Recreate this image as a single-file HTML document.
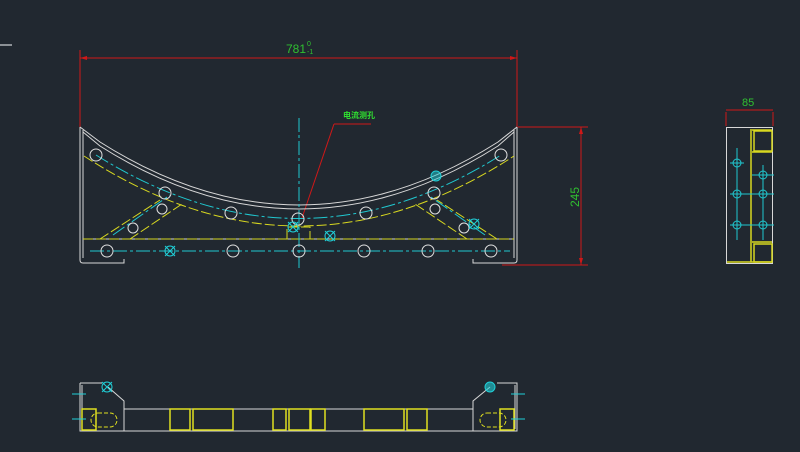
<!DOCTYPE html>
<html><head><meta charset="utf-8"><style>
html,body{margin:0;padding:0;background:#212830;width:800px;height:452px;overflow:hidden}
svg{display:block}
text{font-family:"Liberation Sans","Noto Sans CJK SC",sans-serif}
</style></head><body>
<svg width="800" height="452" viewBox="0 0 800 452" fill="none">
<rect width="800" height="452" fill="#212830"/>
<line x1="0" y1="45" x2="12" y2="45" stroke="#b0b4b8" stroke-width="1.5"/>

<!-- top dimension -->
<g stroke="#d01818" stroke-width="1">
<line x1="80" y1="50" x2="80" y2="127"/>
<line x1="517" y1="50" x2="517" y2="127"/>
<line x1="80" y1="58" x2="517" y2="58"/>
<line x1="518" y1="127" x2="588" y2="127"/>
<line x1="502" y1="265" x2="588" y2="265"/>
<line x1="581" y1="127" x2="581" y2="265"/>
<line x1="302" y1="218" x2="334" y2="124"/>
<line x1="334" y1="124" x2="371" y2="124"/>
</g>
<path d="M80 58 l7 -2 v4z M517 58 l-7 -2 v4z M581 127 l-2 7 h4z M581 265 l-2 -7 h4z" fill="#d01818"/>
<text x="286" y="53" fill="#30c030" font-size="12">781</text>
<text x="307" y="46" fill="#30c030" font-size="7">0</text>
<text x="307" y="54" fill="#30c030" font-size="7">-1</text>
<text x="343" y="118" fill="#30e030" font-size="8" font-weight="bold">电流测孔</text>
<text x="0" y="0" fill="#30c030" font-size="12" transform="translate(579,207) rotate(-90)">245</text>

<!-- main frame -->
<g stroke="#d8d8d8" stroke-width="1">
<path d="M80 127 V260 Q80 263 83 263 H124 V259"/>
<path d="M83 130 V258"/>
<path d="M517 127 V260 Q517 263 514 263 H473 V259"/>
<path d="M514 130 V258"/>
<path d="M80 127 L100 142 Q299 268 498 142 L517 127"/>
<path d="M83 132 L100 146 Q299 272 498 146 L514 132"/>
<line x1="83" y1="239" x2="514" y2="239"/>
</g>
<!-- yellow dashed -->
<g stroke="#d8d820" stroke-width="1" stroke-dasharray="10 3">
<line x1="83" y1="239" x2="514" y2="239"/>
<path d="M84 156 Q299 296 514 156"/>
<path d="M100 239 L160 200 M130 239 L182 204 M497 239 L437 200 M467 239 L415 204"/>
<path d="M287 239 V227 H310 V239"/>
</g>
<!-- cyan center lines -->
<g stroke="#20c8d0" stroke-width="1" stroke-dasharray="14 3 3 3">
<line x1="299" y1="118" x2="299" y2="268"/>
<line x1="90" y1="251" x2="510" y2="251"/>
<path d="M96 155 Q299 282 501 155"/>
<path d="M113 235 L170 195 M485 235 L428 195"/>
</g>
<!-- holes -->
<g stroke="#e0e0e0" stroke-width="1">
<circle cx="107" cy="251" r="6"/><circle cx="233" cy="251" r="6"/><circle cx="299" cy="251" r="6"/>
<circle cx="364" cy="251" r="6"/><circle cx="428" cy="251" r="6"/><circle cx="491" cy="251" r="6"/>
<circle cx="96" cy="155" r="6"/><circle cx="501" cy="155" r="6"/>
<circle cx="165" cy="193" r="6"/><circle cx="434" cy="193" r="6"/>
<circle cx="231" cy="213" r="6"/><circle cx="366" cy="213" r="6"/>
<circle cx="298" cy="219" r="6"/>
<circle cx="162" cy="209" r="5"/><circle cx="435" cy="209" r="5"/>
<circle cx="133" cy="228" r="5"/><circle cx="464" cy="228" r="5"/>
</g>
<g stroke="#20d0d8" stroke-width="1">
<circle cx="170" cy="251" r="5"/><path d="M165 246l10 10M175 246l-10 10"/>
<circle cx="330" cy="236" r="5"/><path d="M325 231l10 10M335 231l-10 10"/>
<circle cx="293" cy="227" r="5"/><path d="M288 222l10 10M298 222l-10 10"/>
<circle cx="436" cy="176" r="5" fill="#20d0d8" fill-opacity=".5"/>
<circle cx="474" cy="224" r="5"/><path d="M469 219l10 10M479 219l-10 10"/>
</g>

<!-- side view -->
<g stroke="#d01818" stroke-width="1">
<line x1="726" y1="112" x2="726" y2="126"/><line x1="773" y1="112" x2="773" y2="126"/>
<line x1="726" y1="110" x2="773" y2="110"/>
</g>
<text x="742" y="106" fill="#30c030" font-size="11">85</text>
<g stroke="#d8d8d8"><rect x="726.5" y="127.5" width="46" height="136"/></g>
<g stroke="#d8d820" stroke-width="1.5">
<path d="M751 129 V262 M752 130 H772 M752 152 H772 M752 242 H772 M727 262 H772"/>
<rect x="754" y="131" width="18" height="20"/><rect x="754" y="244" width="18" height="18"/>
</g>
<g stroke="#20c8d0" stroke-width="1">
<line x1="737" y1="148" x2="737" y2="240"/><line x1="763" y1="165" x2="763" y2="240"/>
<circle cx="737" cy="163" r="4"/><circle cx="737" cy="194" r="4"/><circle cx="737" cy="225" r="4"/>
<circle cx="763" cy="175" r="4"/><circle cx="763" cy="194" r="4"/><circle cx="763" cy="225" r="4"/>
<path d="M730 163h14M730 194h44M730 225h44M752 175h22"/>
</g>

<!-- bottom view -->
<g stroke="#d8d8d8" stroke-width="1">
<path d="M80 383 H102 M80 383 V431 H517 V383 H497 M124 409 H473 M82 385 V429 M515 385 V429"/>
<path d="M108 387 L124 401 V431 M490 387 L473 401 V431"/>
</g>
<g stroke="#e0e020" stroke-width="1.5">
<rect x="82" y="409" width="14" height="21"/><rect x="500" y="409" width="14" height="21"/>
<rect x="170" y="409" width="20" height="21"/><rect x="193" y="409" width="40" height="21"/>
<rect x="273" y="409" width="13" height="21"/><rect x="289" y="409" width="21" height="21"/><rect x="311" y="409" width="14" height="21"/>
<rect x="364" y="409" width="40" height="21"/><rect x="407" y="409" width="20" height="21"/>
</g>
<g stroke="#e0e020" stroke-width="1" stroke-dasharray="4 2">
<rect x="91" y="413" width="26" height="14" rx="7"/><rect x="480" y="413" width="26" height="14" rx="7"/>
</g>
<g stroke="#20d0d8" stroke-width="1">
<circle cx="107" cy="387" r="5"/><path d="M102 382l10 10M112 382l-10 10"/>
<circle cx="490" cy="387" r="5" fill="#20d0d8" fill-opacity=".6"/>
<path d="M72 394h14M72 419h14M511 394h14M511 419h14"/>
</g>
</svg>
</body></html>
